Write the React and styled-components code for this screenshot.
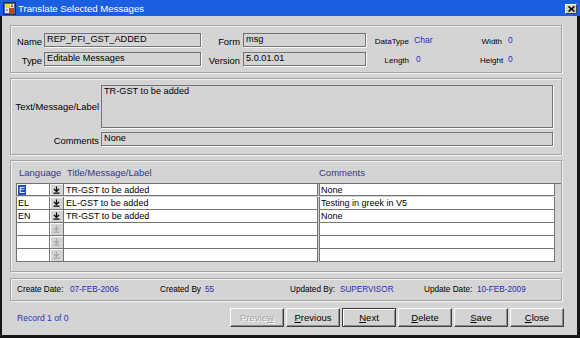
import React from 'react';
import styled, { createGlobalStyle } from 'styled-components';

const Global = createGlobalStyle`
  html, body { margin: 0; padding: 0; background: #fff; }
  body { font-family: "Liberation Sans", Arial, sans-serif; }
`;

const Window = styled.div`
  width: 580px;
  height: 338px;
  box-sizing: border-box;
  display: flex;
  flex-direction: column;
  background: #d4d4d4;
  overflow: hidden;
`;

const TitleBar = styled.div`
  height: 16px;
  flex: none;
  background: #1b5ee0;
  display: flex;
  align-items: center;
  padding: 0 3px 0 3px;
  gap: 2px;
  color: #fff;
  font-size: 9.6px;
`;

const TitleText = styled.span`
  flex: 1;
  white-space: nowrap;
`;

const CloseBtn = styled.div`
  width: 12px;
  height: 10px;
  box-sizing: border-box;
  background: #d4d0c8;
  border: 1px solid;
  border-color: #fff #404040 #404040 #fff;
  display: flex;
  align-items: center;
  justify-content: center;
  margin-top: 1px;
`;

const Body = styled.div`
  flex: 1;
  border-style: solid;
  border-color: #161616;
  border-width: 0 3px 3px 2px;
  padding: 9px 15px 0 8px;
  display: flex;
  flex-direction: column;
`;

const Panel = styled.div`
  border: 1px solid #a4a4a4;
  box-shadow: inset 1px 1px 0 #f2f2f2, 1px 1px 0 #f2f2f2;
  margin-top: ${p => p.$mt || 0}px;
  height: ${p => p.$h}px;
  box-sizing: border-box;
`;

const HeaderGrid = styled.div`
  display: grid;
  grid-template-columns: 33px 157px 42px 123px 46px 68px 25px 1fr;
  grid-template-rows: 14px 14px;
  row-gap: 5px;
  padding-top: 7px;
`;

const TextGrid = styled.div`
  display: grid;
  grid-template-columns: 90px 452px;
  grid-template-rows: 43px 14px;
  row-gap: 4px;
  padding-top: 6px;
`;

const Label = styled.div`
  font-size: ${p => p.$size || 9.4}px;
  text-align: right;
  padding-right: ${p => p.$pr ?? 2}px;
  padding-top: ${p => p.$pt ?? 2}px;
  color: #000;
  white-space: nowrap;
  align-self: ${p => p.$top ? 'start' : 'center'};
`;

const Value = styled.div`
  font-size: ${p => p.$size || 8.4}px;
  color: #2a2ac8;
  padding-left: ${p => p.$pl || 2}px;
  white-space: nowrap;
  align-self: center;
`;

const Field = styled.div`
  box-sizing: border-box;
  background: #d4d4d4;
  border: 1px solid #747474;
  box-shadow: 1px 1px 0 #fafafa;
  font-size: 9.2px;
  line-height: 11px;
  padding: 0 2px;
  color: #000;
  white-space: nowrap;
  overflow: hidden;
`;

const GridPanelInner = styled.div`
  padding: 0 0 0 5px;
`;

const GridHead = styled.div`
  display: flex;
  height: 22px;
  align-items: center;
  color: #34348a;
  font-size: 9.5px;
`;

const HeadCell = styled.div`
  width: ${p => p.$w}px;
  padding-left: ${p => p.$pl}px;
  box-sizing: border-box;
  white-space: nowrap;
  padding-top: 1px;
`;

const Rows = styled.div`
  display: flex;
  flex-direction: column;
`;

const Row = styled.div`
  display: flex;
  height: 13px;
  border-top: ${p => p.$first ? '1px solid #747474' : 'none'};
`;

const Cell = styled.div`
  width: ${p => p.$w}px;
  height: ${p => p.$first ? 12 : 13}px;
  box-sizing: border-box;
  background: #fff;
  border-right: 1px solid #747474;
  border-bottom: 1px solid #747474;
  border-left: ${p => p.$left ? '1px solid #747474' : 'none'};
  margin-left: ${p => p.$gap || 0}px;
  font-size: 9px;
  line-height: 12px;
  padding-left: ${p => p.$pl ?? 2}px;
  white-space: nowrap;
  overflow: hidden;
  color: #000;
`;

const DropCell = styled.div`
  width: 14px;
  height: ${p => p.$first ? 12 : 13}px;
  box-sizing: border-box;
  background: #d4d4d4;
  border-right: 1px solid #747474;
  border-bottom: 1px solid #747474;
  box-shadow: inset 1px 1px 0 #fff;
  display: flex;
  align-items: center;
  justify-content: center;
`;

const Selected = styled.span`
  background: #2348c8;
  color: #fff;
  padding: 0 1px;
  display: inline-block;
  line-height: 11px;
`;

const InfoRow = styled.div`
  display: flex;
  align-items: center;
  height: 100%;
  padding-left: 6px;
  font-size: 8.2px;
`;

const InfoGroup = styled.div`
  width: ${p => p.$w ? p.$w + 'px' : 'auto'};
  display: flex;
  align-items: center;
  white-space: nowrap;
`;

const InfoLabel = styled.span`
  width: ${p => p.$w}px;
  color: #000;
`;

const InfoValue = styled.span`
  color: #2a2ab4;
`;

const ButtonRow = styled.div`
  display: flex;
  align-items: center;
  height: 19px;
  margin-top: 7px;
  margin-right: -2px;
  padding-left: 7px;
`;

const RecordText = styled.div`
  flex: 1;
  color: #2a3ab8;
  font-size: 8.6px;
`;

const Buttons = styled.div`
  display: flex;
  gap: 2px;
`;

const Btn = styled.button`
  width: 54px;
  height: 19px;
  box-sizing: border-box;
  background: #d4d4d4;
  border: 1px solid;
  border-color: ${p => p.$default ? '#3a3a3a' : '#fcfcfc #404040 #404040 #fcfcfc'};
  box-shadow: ${p => p.$default
    ? 'inset 1px 1px 0 #fff, inset -1px -1px 0 #8a8a8a'
    : 'inset -1px -1px 0 #8c8c8c'};
  font-family: "Liberation Sans", Arial, sans-serif;
  font-size: 9.5px;
  color: ${p => p.disabled ? '#a4a4a4' : '#000'};
  text-shadow: ${p => p.disabled ? '1px 1px 0 #fff' : 'none'};
  padding: 0;
  cursor: default;
`;

const TitleIcon = () => (
  <svg width="13" height="13" viewBox="0 0 13 13">
    <rect x="0.5" y="0.5" width="12" height="12" fill="#3b6fb0" stroke="#1a2a60" />
    <rect x="2" y="2" width="5" height="4" fill="#f4d830" />
    <rect x="7" y="2" width="4" height="4" fill="#e8e8e8" />
    <rect x="2" y="6" width="4" height="5" fill="#e8e8e8" />
    <rect x="6" y="6" width="5" height="5" fill="#d63a2a" />
    <path d="M3 8h2M8 3h2M8 4.5h2" stroke="#333" strokeWidth="0.8" />
  </svg>
);

const CloseGlyph = () => (
  <svg width="7" height="6" viewBox="0 0 7 6">
    <path d="M0.5 0.5 L6.5 5.5 M6.5 0.5 L0.5 5.5" stroke="#000" strokeWidth="1.6" />
  </svg>
);

const DropGlyph = ({ dim }) => (
  <svg width="7" height="8" viewBox="0 0 7 8">
    <path d="M3.5 0.5 V5 M1 3 L3.5 5.5 L6 3 M0.5 7.2 H6.5"
      stroke={dim ? '#a8a8a8' : '#000'} strokeWidth="1.2" fill="none" />
  </svg>
);

const rows = [
  { lang: 'E', sel: true, title: 'TR-GST to be added', comment: 'None' },
  { lang: 'EL', title: 'EL-GST to be added', comment: 'Testing in greek in V5' },
  { lang: 'EN', title: 'TR-GST to be added', comment: 'None' },
  { lang: '', title: '', comment: '', empty: true },
  { lang: '', title: '', comment: '', empty: true },
  { lang: '', title: '', comment: '', empty: true },
];

export default function App() {
  return (
    <>
      <Global />
      <Window>
        <TitleBar>
          <TitleIcon />
          <TitleText>Translate Selected Messages</TitleText>
          <CloseBtn><CloseGlyph /></CloseBtn>
        </TitleBar>
        <Body>
          <Panel $h={48}>
            <HeaderGrid>
              <Label>Name</Label>
              <Field>REP_PFI_GST_ADDED</Field>
              <Label $pr={3}>Form</Label>
              <Field>msg</Field>
              <Label $size={8} $pr={3}>DataType</Label>
              <Value $size={8.6}>Char</Value>
              <Label $size={8} $pr={3}>Width</Label>
              <Value $pl={3}>0</Value>

              <Label>Type</Label>
              <Field>Editable Messages</Field>
              <Label $pr={3}>Version</Label>
              <Field>5.0.01.01</Field>
              <Label $size={8} $pr={3}>Length</Label>
              <Value $pl={4}>0</Value>
              <Label $size={8} $pr={3}>Height</Label>
              <Value $pl={3}>0</Value>
            </HeaderGrid>
          </Panel>

          <Panel $mt={5} $h={77}>
            <TextGrid>
              <Label $pt={0}>Text/Message/Label</Label>
              <Field>TR-GST to be added</Field>
              <Label>Comments</Label>
              <Field>None</Field>
            </TextGrid>
          </Panel>

          <Panel $mt={5} $h={112}>
            <GridPanelInner>
              <GridHead>
                <HeadCell $w={48} $pl={3}>Language</HeadCell>
                <HeadCell $w={255} $pl={3}>Title/Message/Label</HeadCell>
                <HeadCell $w={236} $pl={0}>Comments</HeadCell>
              </GridHead>
              <Rows>
                {rows.map((r, i) => (
                  <Row key={i} $first={i === 0}>
                    <Cell $w={34} $left $first={i === 0} $pl={1}>
                      {r.sel ? <Selected>{r.lang}</Selected> : r.lang}
                    </Cell>
                    <DropCell $first={i === 0}><DropGlyph dim={r.empty} /></DropCell>
                    <Cell $w={254} $first={i === 0}>{r.title}</Cell>
                    <Cell $w={236} $left $gap={1} $first={i === 0} $pl={1}>{r.comment}</Cell>
                  </Row>
                ))}
              </Rows>
            </GridPanelInner>
          </Panel>

          <Panel $mt={6} $h={23}>
            <InfoRow>
              <InfoGroup $w={143}>
                <InfoLabel $w={53}>Create Date:</InfoLabel>
                <InfoValue>07-FEB-2006</InfoValue>
              </InfoGroup>
              <InfoGroup $w={130}>
                <InfoLabel $w={45}>Created By</InfoLabel>
                <InfoValue>55</InfoValue>
              </InfoGroup>
              <InfoGroup $w={134}>
                <InfoLabel $w={50}>Updated By:</InfoLabel>
                <InfoValue>SUPERVISOR</InfoValue>
              </InfoGroup>
              <InfoGroup>
                <InfoLabel $w={53}>Update Date:</InfoLabel>
                <InfoValue>10-FEB-2009</InfoValue>
              </InfoGroup>
            </InfoRow>
          </Panel>

          <ButtonRow>
            <RecordText>Record 1 of 0</RecordText>
            <Buttons>
              <Btn disabled>Previe<u>w</u></Btn>
              <Btn><u>P</u>revious</Btn>
              <Btn $default><u>N</u>ext</Btn>
              <Btn><u>D</u>elete</Btn>
              <Btn><u>S</u>ave</Btn>
              <Btn><u>C</u>lose</Btn>
            </Buttons>
          </ButtonRow>
        </Body>
      </Window>
    </>
  );
}
